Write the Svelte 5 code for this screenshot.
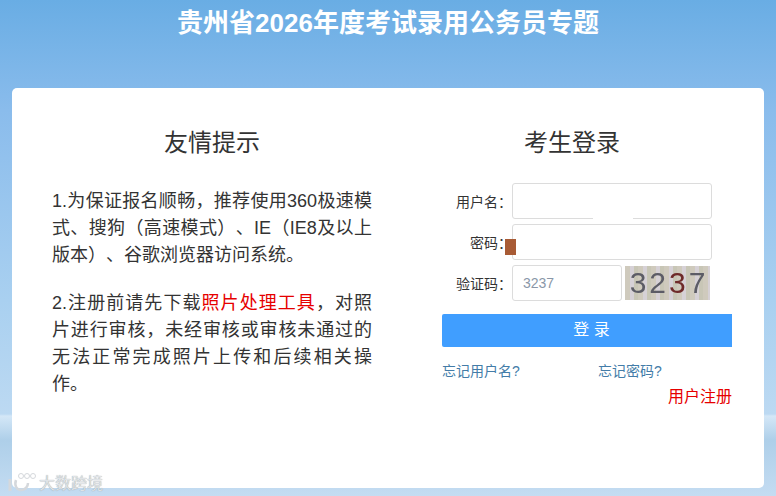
<script>
    let username = "";
    let password = "";
    let captcha = "";
</script>

<div class="page">
    <h1>贵州省2026年度考试录用公务员专题</h1>

    <div class="card">
        <section class="tips">
            <h2>友情提示</h2>
            <p>1.为保证报名顺畅，推荐使用360极速模式、搜狗（高速模式）、IE（IE8及以上版本）、谷歌浏览器访问系统。</p>
            <p>2.注册前请先下载<a href="#tool" class="red">照片处理工具</a>，对照片进行审核，未经审核或审核未通过的无法正常完成照片上传和后续相关操作。</p>
        </section>

        <section class="login">
            <h2>考生登录</h2>
            <form>
                <div class="row">
                    <label for="user">用户名：</label>
                    <div class="field">
                        <input id="user" bind:value={username} />
                        <span class="gap"></span>
                    </div>
                </div>
                <div class="row">
                    <label for="pwd">密码：</label>
                    <div class="field">
                        <input id="pwd" type="password" bind:value={password} />
                        <span class="marker"></span>
                    </div>
                </div>
                <div class="row">
                    <label for="code">验证码：</label>
                    <input id="code" class="short" placeholder="3237" bind:value={captcha} />
                    <div class="captcha"><span>3</span><span>2</span><span class="dark">3</span><span>7</span></div>
                </div>
                <button type="button">登 录</button>
                <div class="links">
                    <a href="#user">忘记用户名?</a>
                    <a href="#pwd">忘记密码?</a>
                </div>
                <a href="#reg" class="register">用户注册</a>
            </form>
        </section>
    </div>

    <div class="watermark">
        <svg width="28" height="20" viewBox="0 0 28 20" fill="none">
            <path d="M2 7v12" stroke-width="3" />
            <path d="M8 8c-2 6 1 10 5 10s7-3 7-7" stroke-width="2.5" />
            <circle cx="13" cy="4" r="2.5" stroke-width="1" />
            <circle cx="19" cy="4" r="2.5" stroke-width="1" />
            <circle cx="25" cy="4" r="2.5" stroke-width="1" />
        </svg>
        <span>大数跨境</span>
    </div>
</div>

<style>
    :global(body) {
        margin: 0;
    }

    .page {
        position: relative;
        width: 776px;
        height: 496px;
        overflow: hidden;
        padding-top: 7px;
        box-sizing: border-box;
        background: linear-gradient(180deg, #69ade4 0%, #8abcec 110px, #a9d0f0 300px, #bcd9f2 414px, #d4e7f7 416px, #aecfe9 440px, #c4dcf2 496px);
        font-family: "Microsoft YaHei", "Liberation Sans", "Noto Sans CJK SC", sans-serif;
        text-spacing-trim: space-all;
    }

    h1 {
        margin: 0;
        height: 33px;
        line-height: 33px;
        text-align: center;
        color: #fff;
        font-size: 26px;
        font-weight: 700;
    }

    .card {
        position: relative;
        display: flex;
        width: 752px;
        height: 400px;
        margin: 48px 0 0 12px;
        background: #fff;
        border-radius: 5px;
    }

    h2 {
        margin: 0;
        font-size: 24px;
        font-weight: 400;
        line-height: 32px;
        color: #333;
        text-align: center;
    }

    .tips {
        width: 320px;
        margin-left: 40px;
        padding-top: 39px;
    }

    .tips h2 {
        margin-bottom: 29px;
    }

    .tips p {
        margin: 0 0 21px;
        font-size: 18px;
        line-height: 27px;
        color: #333;
        text-align: justify;
    }

    .red {
        color: #e60000;
        text-decoration: none;
    }

    .login {
        width: 290px;
        margin-left: 70px;
        padding-top: 39px;
    }

    .login h2 {
        margin-bottom: 24px;
        padding-right: 30px;
    }

    .row {
        display: flex;
        align-items: center;
        height: 36px;
        margin-bottom: 5px;
    }

    label {
        width: 70px;
        font-size: 14px;
        color: #333;
        text-align: right;
    }

    input {
        width: 200px;
        height: 36px;
        padding: 0 10px;
        box-sizing: border-box;
        border: 1px solid #dcdcdc;
        border-radius: 3px;
        background: #fff;
        font-size: 14px;
        font-family: inherit;
        outline: none;
    }

    input::placeholder {
        color: #8a97a8;
        opacity: 1;
    }

    input.short {
        width: 110px;
    }

    .field {
        position: relative;
        height: 36px;
    }

    .gap {
        position: absolute;
        left: 81px;
        bottom: 0;
        width: 40px;
        height: 1px;
        background: #fff;
    }

    .marker {
        position: absolute;
        left: -7px;
        top: 15px;
        width: 11px;
        height: 16px;
        background: #a85b35;
    }

    .captcha {
        display: flex;
        justify-content: center;
        gap: 3px;
        width: 85px;
        height: 34px;
        margin-left: 3px;
        background: repeating-linear-gradient(90deg, #cfcabd 0 5px, #d6d1d6 5px 9px, #c8c6b6 9px 13px);
        font-family: "Liberation Sans", sans-serif;
        font-size: 30px;
        line-height: 33px;
        color: #5c5c66;
    }

    .captcha span {
        filter: blur(0.4px);
    }

    .captcha .dark {
        color: #6e2a2a;
    }

    button {
        display: block;
        width: 290px;
        height: 33px;
        margin-top: 13px;
        padding: 0 0 5px 9px;
        border: none;
        border-radius: 2px 0 0 2px;
        background: #409eff;
        color: #fff;
        font-size: 16px;
        font-family: inherit;
    }

    .links {
        display: flex;
        margin-top: 16px;
        line-height: 16px;
    }

    .links a {
        flex: none;
        width: 156px;
        font-size: 14px;
        color: #437ca8;
        text-decoration: none;
    }

    .links a:last-child {
        width: auto;
    }

    .register {
        display: block;
        margin-top: 10px;
        line-height: 16px;
        text-align: right;
        font-size: 16px;
        color: #e60000;
        text-decoration: none;
    }

    .watermark {
        position: absolute;
        left: 8px;
        top: 470px;
        display: flex;
        align-items: center;
        gap: 3px;
        color: #dfe3e7;
        font-size: 16px;
        text-shadow: 0 0 1px #8a8f94;
    }

    .watermark svg {
        stroke: #d5d8dc;
    }
</style>
